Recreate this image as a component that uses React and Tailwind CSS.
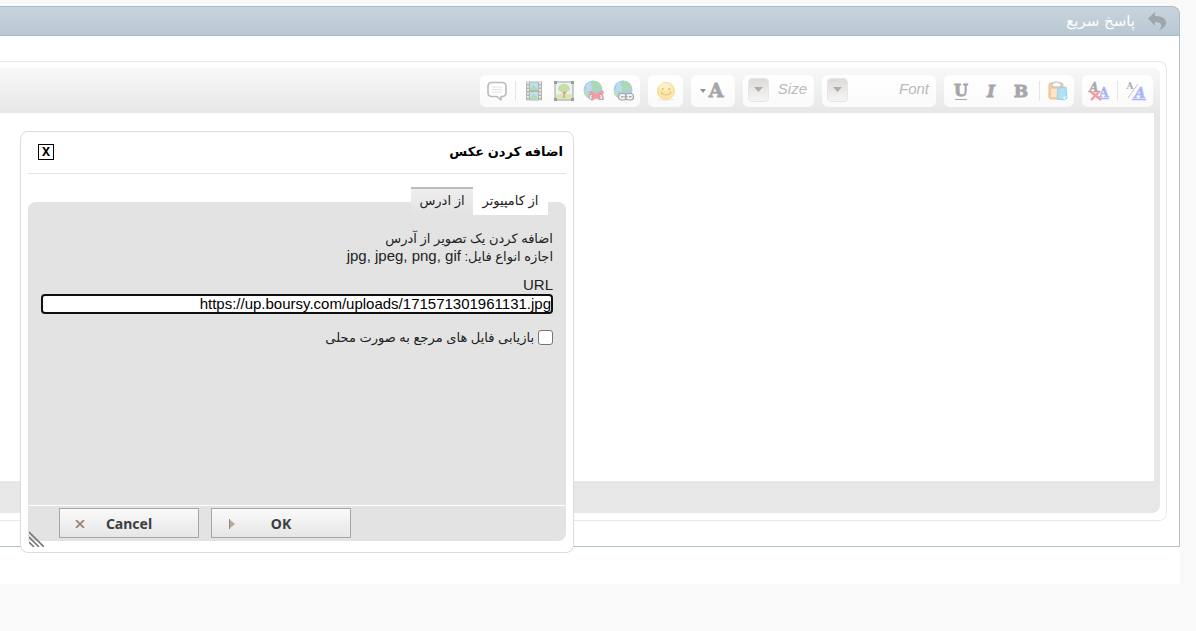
import React from "react";

const Divider = () => <span className="mx-[3px] h-5 w-px bg-[#e6e6e6]" />;

function ToolButton({ label, children }) {
  return (
    <button type="button" aria-label={label} className="flex h-8 w-[30px] items-center justify-center">
      {children}
    </button>
  );
}

function Group({ className, children }) {
  return (
    <div className={`flex h-8 items-center rounded-md bg-gradient-to-b from-white to-[#fafafa] ${className}`}>
      {children}
    </div>
  );
}

function Glyph({ children }) {
  return (
    <svg width="22" height="22" viewBox="0 0 22 22" aria-hidden="true">
      {children}
    </svg>
  );
}

const letter = {
  fontFamily: "'DejaVu Serif', serif",
  fontWeight: 700,
  textAnchor: "middle",
};

function SwitchModeIcon() {
  return (
    <Glyph>
      <text x="5" y="9" fontSize="9" fill="#a9a9ad" {...letter}>A</text>
      <path d="M3 18 13 4" stroke="#c4c4c8" strokeWidth="1" />
      <text x="15" y="18" fontSize="14" fontStyle="italic" fill="#a9b4f6" stroke="#a9b4f6" strokeWidth="0.5" {...letter}>A</text>
      <path d="M7 19.500h14" stroke="#a9b4f6" strokeWidth="1.5" />
    </Glyph>
  );
}

function RemoveFormatIcon() {
  return (
    <Glyph>
      <text x="6" y="12" fontSize="12" fontStyle="italic" fill="#aaaaae" stroke="#aaaaae" strokeWidth="0.5" {...letter}>A</text>
      <text x="16" y="17" fontSize="12" fill="#a9b4f6" stroke="#a9b4f6" strokeWidth="0.5" {...letter}>A</text>
      <path d="M11 18.5h10" stroke="#a9b4f6" strokeWidth="1.5" />
      <path d="m2 11 11 9M12 11 3 20" stroke="#f59a9f" strokeWidth="2.4" />
    </Glyph>
  );
}

function PasteIcon() {
  return (
    <Glyph>
      <rect x="2" y="3" width="14" height="16" rx="2" fill="#f5cfa2" stroke="#e5bc90" />
      <path d="M5 3h2l1-1h3l1 1h2v4H5z" fill="#fafafa" stroke="#bcbcbc" />
      <path d="M4 9h9v8H4z" fill="#fbe5c9" />
      <path d="m11 8 8-1 1 11-3 2-7-1z" fill="#b2e1f3" stroke="#9acfe6" />
      <path d="m17 20 3-4-4 1z" fill="#e4f6fc" />
    </Glyph>
  );
}

function SmileIcon() {
  return (
    <Glyph>
      <ellipse cx="11" cy="19.5" rx="9" ry="1.5" fill="#f0efec" />
      <circle cx="11" cy="11" r="8.500" fill="#fbe6a5" stroke="#f6dc96" />
      <ellipse cx="10" cy="7" rx="6" ry="4" fill="#fcefc6" />
      <circle cx="7.8" cy="9" r="1" fill="#d4bd88" />
      <circle cx="14.2" cy="9" r="1" fill="#d4bd88" />
      <path d="M6 12c2 4 8 4 10 0" fill="none" stroke="#e0c486" strokeWidth="1.2" />
    </Glyph>
  );
}

function Globe() {
  return (
    <>
      <circle cx="10" cy="10" r="9.5" fill="#a9c9ef" />
      <circle cx="8" cy="7" r="5" fill="#bfd8f5" />
      <path d="M9 1c5-1 9 3 10 7l-3 3-3-1-1 3-4-3 2-3-3-2z" fill="#abd9b4" />
      <path d="m2 8 3 3 1 4-1 3C1 15 0 11 2 8z" fill="#b6dec0" />
    </>
  );
}

function LinkIcon() {
  return (
    <Glyph>
      <Globe />
      <g fill="#f3f3f3" stroke="#a5a5a8" strokeWidth="1.2">
        <rect x="5.5" y="13.5" width="8" height="6.5" rx="3" />
        <rect x="12.5" y="13.5" width="8" height="6.5" rx="3" />
      </g>
      <path d="M8 16.7h2.5M11.5 16.7h3M16 16.7h2.5" stroke="#a5a5a8" strokeWidth="1.4" />
    </Glyph>
  );
}

function UnlinkIcon() {
  return (
    <Glyph>
      <Globe />
      <path d="m6 11 3 0 4 3 6-4 2 2-1 3 1 5h-5l-3-2-4 3-3-3 1-4z" fill="#f49b9d" />
      <g fill="#f7e9e9" stroke="#b3a3a5">
        <path d="M9 14.500H8q-2 .5-2 2.500t2 2.500h1" />
        <path d="M17 14.500h1q2 .5 2 2.500t-2 2.500h-1" />
      </g>
      <path d="M8 17h2M16 17h2" stroke="#a5a5a8" />
    </Glyph>
  );
}

function ImageIcon() {
  return (
    <Glyph>
      <rect x="2" y="2" width="18" height="18" fill="#e9f3f5" stroke="#bdbdba" strokeWidth="1.5" />
      <path d="M3 15c5-2 11-2 16 0v4H3z" fill="#dde5ac" />
      <path d="M11 11v7M11 14l3-3M11 13 8 10" stroke="#bea98a" strokeWidth="1.4" />
      <path d="M5 9c0-3 3-5 6-5s6 2 6 5c0 2-3 3-5 2-2 2-7 1-7-2z" fill="#c9dda6" />
      <path d="M1 1h3v3H1zM18 1h3v3h-3zM1 18h3v3H1zM18 18h3v3h-3z" fill="#9b9b9b" />
    </Glyph>
  );
}

function FilmIcon() {
  return (
    <Glyph>
      <path d="M3 1.5h16v19H3z" fill="#b4b5b5" />
      <path d="M7 2.5h8v7.500H7zM7 12h8v7.500H7z" fill="#b9e4ee" />
      <path d="m7 8 4-3 4 4v1H7zM7 17l4-3 4 4v1.500H7z" fill="#b2dcb8" />
      <path d="M5 2v19M17 2v19" stroke="#ededed" strokeWidth="1.800" strokeDasharray="2 1.500" />
    </Glyph>
  );
}

function QuoteIcon() {
  return (
    <Glyph>
      <path
        d="M6 2.500h10q4 0 4 4v6q0 4-4 4h-1v3.500l-4-3.500H6q-4 0-4-4v-6q0-4 4-4z"
        fill="#fff"
        stroke="#bababa"
        strokeWidth="1.600"
        strokeLinejoin="round"
      />
      <path d="M6 7h10M6 9.500h10M6 12h10" stroke="#e2e2e2" />
    </Glyph>
  );
}

function Arrow() {
  return (
    <span className="flex h-6 w-[21px] items-center justify-center rounded-[4px] border border-[#e8e5e5] bg-gradient-to-b from-[#dedada] to-[#f7f4f4]">
      <svg width="9" height="5" viewBox="0 0 9 5" aria-hidden="true">
        <path d="M0 0h9L4.500 5z" fill="#b0acac" />
      </svg>
    </span>
  );
}

const styleLetter = {
  ...letter,
  fontSize: 18,
  fill: "#a6a6aa",
  stroke: "#a6a6aa",
  strokeWidth: 0.8,
};

function Toolbar() {
  return (
    <div className="flex h-[45px] items-center gap-2 bg-gradient-to-b from-[#f8f8f8] to-[#e7e7e7] pr-[7px] whitespace-nowrap">
      <Group className="w-[71px] px-0.5">
        <ToolButton label="Switch editor mode"><SwitchModeIcon /></ToolButton>
        <Divider />
        <ToolButton label="Remove formatting"><RemoveFormatIcon /></ToolButton>
      </Group>
      <Group className="w-[130px] px-px">
        <ToolButton label="Paste"><PasteIcon /></ToolButton>
        <Divider />
        <ToolButton label="Bold"><Glyph><text x="11" y="17" {...styleLetter} fontSize="17">B</text></Glyph></ToolButton>
        <ToolButton label="Italic"><Glyph><text x="11" y="17" {...styleLetter} fontSize="17" fontStyle="italic">I</text></Glyph></ToolButton>
        <ToolButton label="Underline"><Glyph><text x="11" y="16" {...styleLetter} fontSize="16">U</text><path d="M5 19.500h12" stroke="#a6a6aa" /></Glyph></ToolButton>
      </Group>
      <Group className="w-[114px] px-px">
        <button type="button" className="flex h-full w-full items-center justify-between pr-[6px] pl-1 pb-0.5 text-[15px] text-[#b9b9b9] italic">
          Font<Arrow />
        </button>
      </Group>
      <Group className="w-[71px] px-px">
        <button type="button" className="flex h-full w-full items-center justify-between pr-[6px] pl-1 pb-0.5 text-[15px] text-[#b9b9b9] italic">
          Size<Arrow />
        </button>
      </Group>
      <Group className="w-11 justify-center">
        <button type="button" aria-label="Text color" className="flex h-8 items-center">
          <svg width="20" height="22" viewBox="0 0 20 22" aria-hidden="true"><text x="10" y="17" {...styleLetter} fontSize="19">A</text></svg>
          <svg width="6" height="4" viewBox="0 0 6 4" aria-hidden="true"><path d="M0 0h6L3 4z" fill="#929296" /></svg>
        </button>
      </Group>
      <Group className="w-[35px] justify-center">
        <ToolButton label="Smilies"><SmileIcon /></ToolButton>
      </Group>
      <Group className="w-40 px-px">
        <ToolButton label="Link"><LinkIcon /></ToolButton>
        <ToolButton label="Unlink"><UnlinkIcon /></ToolButton>
        <ToolButton label="Image"><ImageIcon /></ToolButton>
        <ToolButton label="Video"><FilmIcon /></ToolButton>
        <Divider />
        <ToolButton label="Quote"><QuoteIcon /></ToolButton>
      </Group>
    </div>
  );
}

function QuickReply() {
  return (
    <section>
      <header className="flex h-[30px] items-center gap-3 rounded-tr-lg border border-l-0 border-[#a8bbc6] bg-gradient-to-b from-[#c8d4dd] to-[#b8c8d2] pr-3">
        <svg width="20" height="20" viewBox="0 0 20 20" aria-hidden="true">
          <path d="M1 7.500 8 1v4c8-.500 12 4 11 8-.700 3-3.500 5-7 6 3-3 4-8-4-8v4z" fill="#a0a6a9" />
        </svg>
        <h2 className="font-['DejaVu_Sans',sans-serif] text-[15px] text-white">پاسخ سریع</h2>
      </header>
      <div className="border-r border-b border-[#b0c1cc] pt-[25px] pr-3 pb-[25px]">
        <div className="rounded-r-lg border border-l-0 border-[#e8e8e8] pt-1.5 pr-1.5 pb-[7px]">
          <div className="overflow-hidden rounded-r-lg bg-[#e7e7e7] pb-8">
            <Toolbar />
            <div className="pr-1.5">
              <textarea aria-label="پاسخ سریع" className="block h-[368px] w-full resize-none bg-white p-2 outline-none" />
            </div>
          </div>
        </div>
      </div>
    </section>
  );
}

const actionClass =
  "grid h-[30px] w-[140px] grid-cols-[40px_1fr_40px] items-center border border-[#a6a6a6] bg-gradient-to-b from-[#fafafa] via-[#f0f0f0] to-[#e6e6e6] pt-0.5 font-['Noto_Sans',sans-serif] text-sm font-bold text-[#3e3e3e]";

function ImageDialog() {
  return (
    <div
      role="dialog"
      aria-labelledby="dialog-title"
      className="absolute top-[131px] left-5 w-[554px] rounded-lg border border-[#dcdcdc] bg-white px-[7px] pb-[11px] text-[13px] text-[#222]"
    >
      <div className="flex h-[42px] items-center justify-between border-b border-[#e2e2e2] pr-[3px] pb-0.5 pl-2.5">
        <h1 id="dialog-title" className="text-[13px] font-bold text-black">اضافه کردن عکس</h1>
        <button type="button" aria-label="Close" className="flex size-4 items-center justify-center border border-black font-['Noto_Sans',sans-serif] text-xs font-bold text-black">X</button>
      </div>
      <div role="tablist" className="relative mt-[13px] flex h-7 pr-[18px]">
        <button type="button" role="tab" aria-selected="false" className="w-[75px] bg-white">از کامپیوتر</button>
        <button type="button" role="tab" aria-selected="true" className="w-[62px] border-t-2 border-[#bdbdbd] bg-gradient-to-b from-[#eeeeee] to-[#e3e3e3] pb-0.5">از ادرس</button>
      </div>
      <div className="-mt-[13px] flex h-[303px] flex-col rounded-t-lg bg-[#e3e3e3] pt-7 pr-[13px] pl-[13px]">
        <div className="leading-[17px]">
          <p>اضافه کردن یک تصویر از آدرس</p>
          <p>اجازه انواع فایل: <span dir="ltr" className="text-[15px]">jpg, jpeg, png, gif</span></p>
        </div>
        <label htmlFor="image-url" className="mt-[11px] text-[15px] leading-[18px]">URL</label>
        <input
          id="image-url"
          type="text"
          dir="ltr"
          defaultValue="https://up.boursy.com/uploads/171571301961131.jpg"
          className="h-5 w-full rounded-[4px] border-2 border-[#101010] bg-white text-right text-[15px] text-black outline-none"
        />
        <div className="mt-3.5 flex items-center gap-1">
          <input id="local" type="checkbox" className="size-[15px] appearance-none rounded-[3px] border border-[#767676] bg-white" />
          <label htmlFor="local">بازیابی فایل های مرجع به صورت محلی</label>
        </div>
      </div>
      <div className="mt-px flex h-[35px] items-center justify-end gap-3 rounded-br-lg bg-[#e3e3e3] pb-0.5 pl-[31px]">
        <button type="button" dir="ltr" className={actionClass}>
          <svg className="justify-self-center" width="6" height="10" viewBox="0 0 6 10" aria-hidden="true"><path d="M0 0v10l6-5z" fill="#b3aba2" /><path d="M.500 0v10" stroke="#9c8672" /></svg>
          <span>OK</span>
        </button>
        <button type="button" dir="ltr" className={actionClass}>
          <svg className="justify-self-center" width="10" height="8" viewBox="0 0 10 8" aria-hidden="true"><path d="m1 0 8 8M9 0 1 8" stroke="#998a7d" strokeWidth="1.800" /></svg>
          <span>Cancel</span>
        </button>
      </div>
      <svg className="absolute bottom-[5px] left-2" width="15" height="16" viewBox="0 0 15 16" aria-hidden="true">
        <path d="m0 1 15 15M0 6l10 10M0 11l5 5" stroke="#777" strokeWidth="1.600" />
      </svg>
    </div>
  );
}

export default function App() {
  return (
    <div dir="rtl" className="relative min-h-screen bg-[#f9f9f9] font-['Liberation_Sans','DejaVu_Sans',sans-serif]">
      <main className="mr-4 bg-white pb-[37px]">
        <div className="bg-[#f9f9f9] pt-1.5">
          <div className="rounded-tr-lg bg-white">
            <QuickReply />
          </div>
        </div>
      </main>
      <ImageDialog />
    </div>
  );
}
